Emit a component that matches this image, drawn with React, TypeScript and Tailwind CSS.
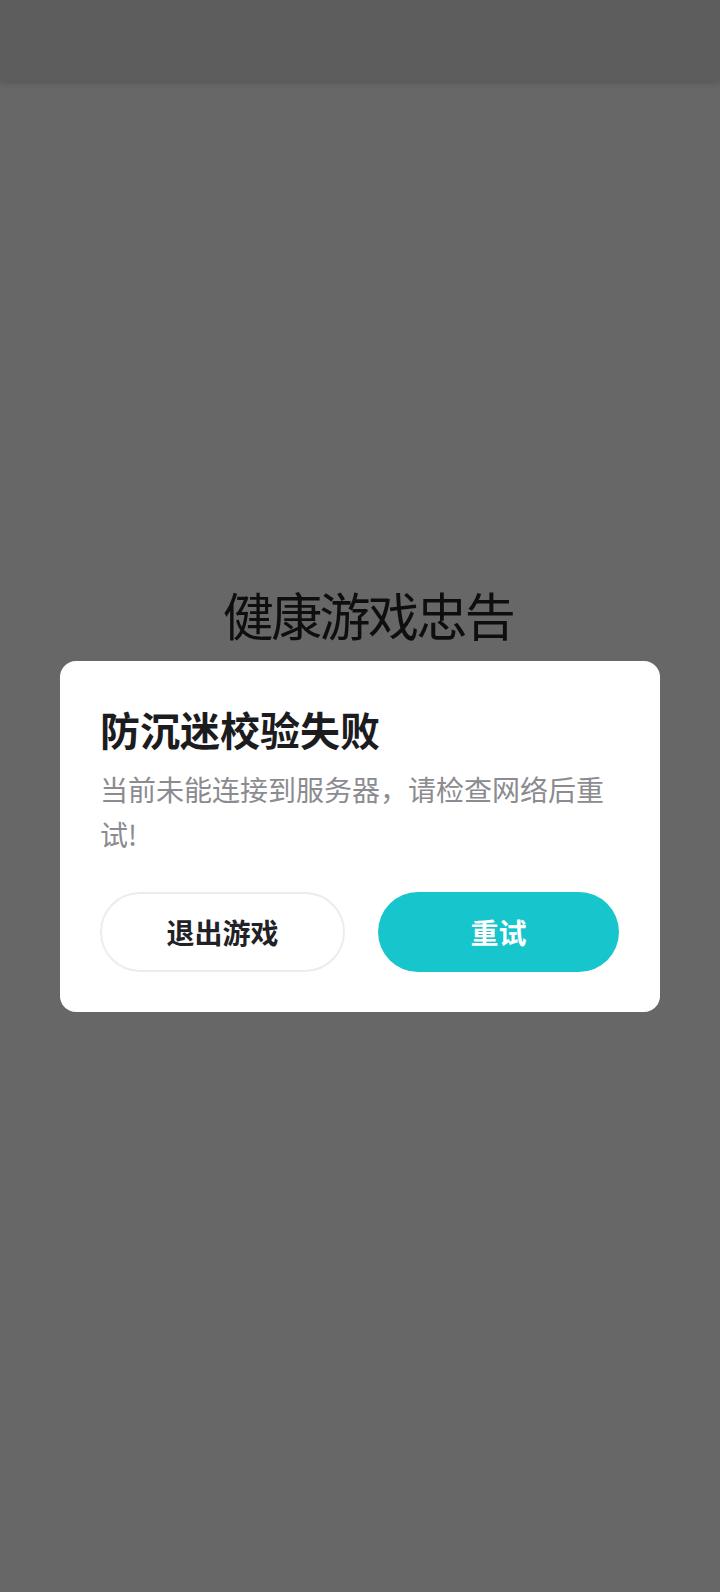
export default function App() {
  return (
    <div
      className="relative w-[720px] h-[1592px] bg-[#676767] overflow-hidden"
      style={{ fontFamily: '"Noto Sans CJK SC", "Noto Sans", sans-serif' }}
    >
      <div className="h-[81px] bg-[#5d5d5d] shadow-[0_2px_6px_rgba(0,0,0,0.18)] relative z-10" />
      <div className="flex justify-center pt-[508px] pl-[16px]">
        <div className="text-[51px] leading-[51px] text-[#0e0e0e] tracking-[-2.6px]">健康游戏忠告</div>
      </div>

      <div className="absolute inset-0 z-20 px-[60px] pt-[661px]">
        <div className="bg-white rounded-[16px] pl-[40px] pr-[41px] pt-[40px] pb-[40px]">
          <div className="text-[40px] leading-[56px] font-bold text-[#1c1c1f]">防沉迷校验失败</div>
          <div className="mt-[10px] text-[28px] leading-[45px] text-[#8b8b90]">
            当前未能连接到服务器，请检查网络后重试!
          </div>
          <div className="mt-[35px] flex gap-[33px]">
            <button className="flex-1 h-[80px] rounded-full border-2 border-[#ececec] bg-white text-[28px] font-bold text-[#222226]">
              退出游戏
            </button>
            <button className="flex-1 h-[80px] rounded-full bg-[#17c5cd] text-[28px] font-bold text-white">
              重试
            </button>
          </div>
        </div>
      </div>
    </div>
  );
}
